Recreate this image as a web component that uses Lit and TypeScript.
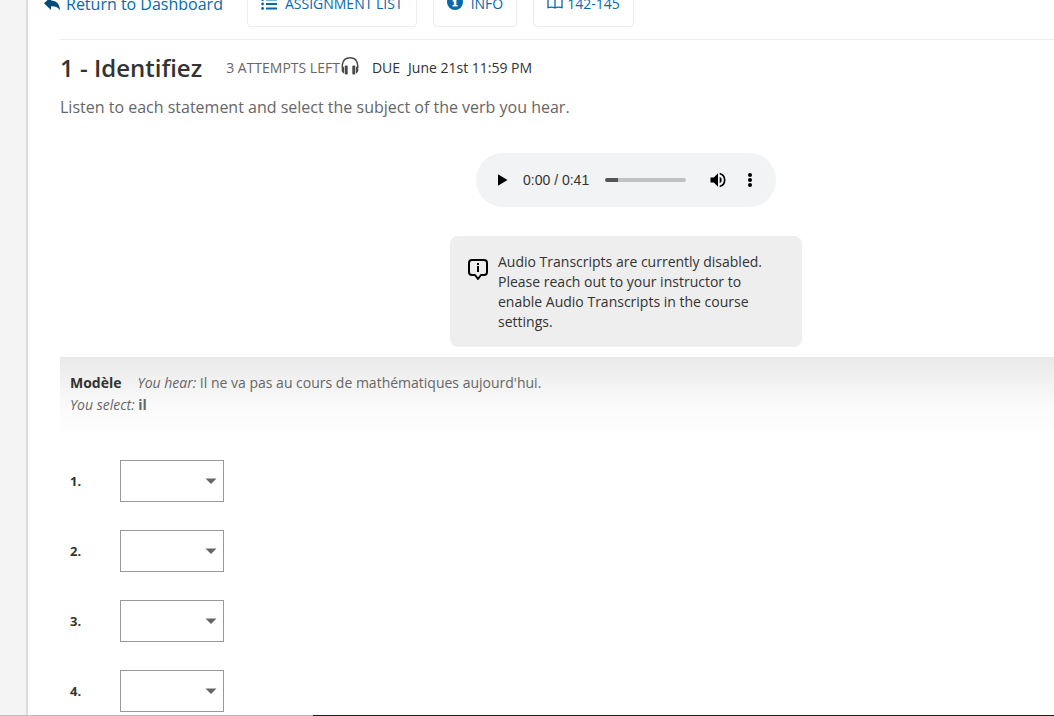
import { LitElement, html, css, svg } from "lit";
import { customElement } from "lit/decorators.js";

const backIcon = svg`<svg class="back-icon" viewBox="0 0 16 14" width="16" height="14" aria-hidden="true">
  <path fill="#034a78" d="M7 0v3.500c5.500 0 8.800 3.500 9 10-2-3.500-4.500-4.500-9-4.300v3.800L0 6.200z"/></svg>`;

const listIcon = svg`<svg viewBox="0 0 18 14" width="18" height="14" aria-hidden="true">
  <g fill="#0669ac"><path d="M5 1.500h11v2H5zM5 6h11v2H5zM5 10.500h11v2H5z"/>
  <circle cx="1.600" cy="2.500" r="1.400"/><circle cx="1.600" cy="7" r="1.400"/><circle cx="1.600" cy="11.500" r="1.400"/></g></svg>`;

const infoIcon = svg`<svg viewBox="0 0 16 16" width="16" height="16" aria-hidden="true">
  <circle cx="8" cy="8" r="8" fill="#0669ac"/><path fill="#fff" d="M6.800 2.500h2.600v2.200H6.800zM5.700 6h3.700v5h1.200v1.500H5.500V11h1.300V7.500H5.700z"/></svg>`;

const bookIcon = svg`<svg viewBox="0 0 16 14" width="16" height="14" aria-hidden="true">
  <path fill="none" stroke="#0669ac" stroke-width="1.300" d="M8 2.200C6.500 1 3.500 1 1 1.500v11.200c2.500-.7 5.500-.5 7 .3 1.500-.8 4.500-1 7-.3V1.500C12.500 1 9.500 1 8 2.200zm0 0V13"/></svg>`;

const headphonesIcon = svg`<svg class="headphones" viewBox="0 0 18 20" width="18" height="20" aria-hidden="true">
  <path fill="none" stroke="#4a4a4a" stroke-width="1.500" d="M1.400 12.500C1.200 11 1.200 10 1.400 8.500 2 4 5 1.700 9 1.700S16 4 16.600 8.500c.2 1.500.2 2.500 0 4"/>
  <path fill="#4a4a4a" d="M3 10.500v7C1.300 16.800.6 15.400.6 14S1.300 11.200 3 10.500zM15 10.500v7c1.700-.7 2.400-2.100 2.400-3.500s-.7-2.800-2.400-3.500z"/>
  <rect x="3.700" y="9.600" width="3" height="9" rx="1" fill="#4a4a4a"/>
  <rect x="11.300" y="9.600" width="3" height="9" rx="1" fill="#4a4a4a"/></svg>`;

const playIcon = svg`<svg viewBox="0 0 20 20" width="20" height="20" aria-hidden="true"><path d="M6 4.300v11.400L15.500 10z"/></svg>`;

const volumeIcon = svg`<svg viewBox="0 0 24 24" width="20" height="20" aria-hidden="true">
  <path d="M3 9v6h4l5 5V4L7 9zm13.500 3A4.500 4.500 0 0 0 14 7.970v8.050A4.470 4.470 0 0 0 16.500 12zM14 3.230v2.060a7 7 0 0 1 0 13.420v2.060a9 9 0 0 0 0-17.540z"/></svg>`;

const moreIcon = svg`<svg viewBox="0 0 20 20" width="20" height="20" aria-hidden="true">
  <circle cx="10" cy="5" r="2"/><circle cx="10" cy="10" r="2"/><circle cx="10" cy="15" r="2"/></svg>`;

const noticeIcon = svg`<svg class="notice-icon" viewBox="0 0 20 22" width="20" height="22" aria-hidden="true">
  <path fill="none" stroke="#000" stroke-width="2" stroke-linejoin="round" d="M4 1h12a3 3 0 0 1 3 3v9a3 3 0 0 1-3 3h-3l-3 4-3-4H4a3 3 0 0 1-3-3V4a3 3 0 0 1 3-3z"/>
  <path d="M9 4h2v2H9zM9 7h2v6H9z"/></svg>`;

const caretIcon = svg`<svg class="caret" viewBox="0 0 12 6" width="12" height="6" aria-hidden="true"><path fill="#666" d="M.5.5h11L6 6z"/></svg>`;

@customElement("audio-player")
class AudioPlayer extends LitElement {
  static styles = css`
    :host {
      display: flex;
      align-items: center;
      box-sizing: border-box;
      width: 300px;
      height: 54px;
      padding: 0 16px;
      border-radius: 27px;
      background: #f1f3f4;
      font: 14px/20px "Liberation Sans", Roboto, sans-serif;
      color: #333;
    }
    button {
      display: flex;
      padding: 0;
      border: 0;
      background: none;
    }
    .time {
      margin: 0 16px 0 11px;
      white-space: nowrap;
    }
    .seek {
      appearance: none;
      flex: 1;
      min-width: 0;
      height: 4px;
      margin: 0 22px 0 0;
      border-radius: 2px;
      background: linear-gradient(to right, #555 16%, #bfc1c2 16%);
    }
    .seek::-webkit-slider-thumb {
      appearance: none;
      width: 0;
      height: 0;
    }
    .more {
      margin-left: 12px;
    }
  `;

  render() {
    return html`
      <button aria-label="Play">${playIcon}</button>
      <span class="time">0:00 / 0:41</span>
      <input class="seek" type="range" min="0" max="41" value="0" aria-label="Seek" />
      <button aria-label="Mute">${volumeIcon}</button>
      <button class="more" aria-label="More options">${moreIcon}</button>
    `;
  }
}

@customElement("app-root")
class AppRoot extends LitElement {
  static styles = css`
    :host {
      display: flex;
      flex-direction: column;
      height: 100vh;
      overflow: hidden;
      background: #fff;
      font: 14px/20px "Open Sans", "Noto Sans", sans-serif;
      color: #333;
    }
    .page {
      flex: 1;
      min-height: 0;
      display: flex;
    }
    .rail {
      flex: none;
      width: 26px;
      border-right: 2px solid #dcdcdc;
      background: #f4f4f4;
    }
    main {
      flex: 1;
      min-width: 0;
      padding-left: 32px;
      overflow: hidden;
    }
    nav {
      display: flex;
      align-items: center;
      gap: 16px;
      margin: -20px 0 12px -16px;
    }
    a {
      display: flex;
      align-items: center;
      color: #0669ac;
      text-decoration: none;
      white-space: nowrap;
    }
    .back {
      gap: 6px;
      margin-right: 8px;
      font-size: 16px;
    }
    .tab {
      box-sizing: border-box;
      height: 47px;
      gap: 8px;
      padding: 0 13px;
      border: 1px solid #ececec;
      border-radius: 4px;
    }
    .tab svg {
      flex: none;
    }
    .tab.list {
      gap: 6px;
    }
    .tab.book {
      gap: 4px;
    }
    .tab.info svg,
    .tab.book svg {
      margin-bottom: 4px;
    }
    .heading {
      display: flex;
      align-items: center;
      height: 56px;
      border-top: 1px solid #ececec;
    }
    h1 {
      margin: 0 24px 0 0;
      font-size: 24px;
      line-height: 32px;
      font-weight: 600;
    }
    .attempts {
      color: #666;
    }
    .headphones {
      margin: 0 13px 4px 1px;
    }
    .due {
      margin-right: 8px;
    }
    .lead {
      margin: 0;
      font-size: 16px;
      line-height: 22px;
      color: #666;
    }
    .media {
      display: flex;
      flex-direction: column;
      align-items: center;
      gap: 29px;
      padding: 35px 0 10px 138px;
    }
    .notice {
      box-sizing: border-box;
      display: flex;
      gap: 10px;
      width: 352px;
      padding: 16px 36px 15px 18px;
      border-radius: 8px;
      background: #eee;
    }
    .notice p {
      margin: 0;
    }
    .notice-icon {
      flex: none;
      margin-top: 7px;
    }
    .model {
      height: 80px;
      box-sizing: border-box;
      padding: 15px 10px;
      line-height: 22px;
      color: #666;
      background: linear-gradient(#e9e9e9, #fafafa 60%, #fff);
    }
    .model p {
      margin: 0;
    }
    .model-title {
      margin-right: 16px;
      color: #333;
    }
    ol {
      display: grid;
      gap: 28px;
      margin: 23px 0 0;
      padding: 0 0 0 10px;
      list-style: none;
    }
    li {
      display: grid;
      grid-template-columns: 50px 104px;
      align-items: center;
    }
    label {
      font-size: 13px;
      font-weight: 700;
    }
    .field {
      display: grid;
      align-items: center;
    }
    select {
      grid-area: 1 / 1;
      appearance: none;
      height: 42px;
      margin: 0;
      padding: 0 30px 0 10px;
      border: 1px solid #999;
      border-radius: 0;
      background: #fff;
      font: inherit;
    }
    .caret {
      grid-area: 1 / 1;
      justify-self: end;
      margin-right: 7px;
      pointer-events: none;
    }
    footer {
      flex: none;
      height: 1px;
      background: linear-gradient(to right, #bbb 313px, #1c1c28 313px);
    }
  `;

  render() {
    return html`
      <div class="page">
        <div class="rail"></div>
        <main>
          <nav>
            <a class="back" href="#">${backIcon}Return to Dashboard</a>
            <a class="tab list" href="#">${listIcon}ASSIGNMENT LIST</a>
            <a class="tab info" href="#">${infoIcon}INFO</a>
            <a class="tab book" href="#">${bookIcon}142-145</a>
          </nav>
          <header class="heading">
            <h1>1 - Identifiez</h1>
            <span class="attempts">3 ATTEMPTS LEFT</span>${headphonesIcon}
            <span class="due">DUE</span><span>June 21st 11:59 PM</span>
          </header>
          <p class="lead">Listen to each statement and select the subject of the verb you hear.</p>
          <section class="media">
            <audio-player></audio-player>
            <div class="notice">
              ${noticeIcon}
              <p>Audio Transcripts are currently disabled. Please reach out to your instructor to enable Audio Transcripts in the course settings.</p>
            </div>
          </section>
          <section class="model">
            <p><b class="model-title">Modèle</b><i>You hear:</i> Il ne va pas au cours de mathématiques aujourd'hui.</p>
            <p><i>You select:</i> <b>il</b></p>
          </section>
          <ol>
            ${[1, 2, 3, 4].map(
              (n) => html`<li>
                <label for="q${n}">${n}.</label>
                <span class="field">
                  <select id="q${n}"><option></option><option>il</option></select>${caretIcon}
                </span>
              </li>`
            )}
          </ol>
        </main>
      </div>
      <footer></footer>
    `;
  }
}
